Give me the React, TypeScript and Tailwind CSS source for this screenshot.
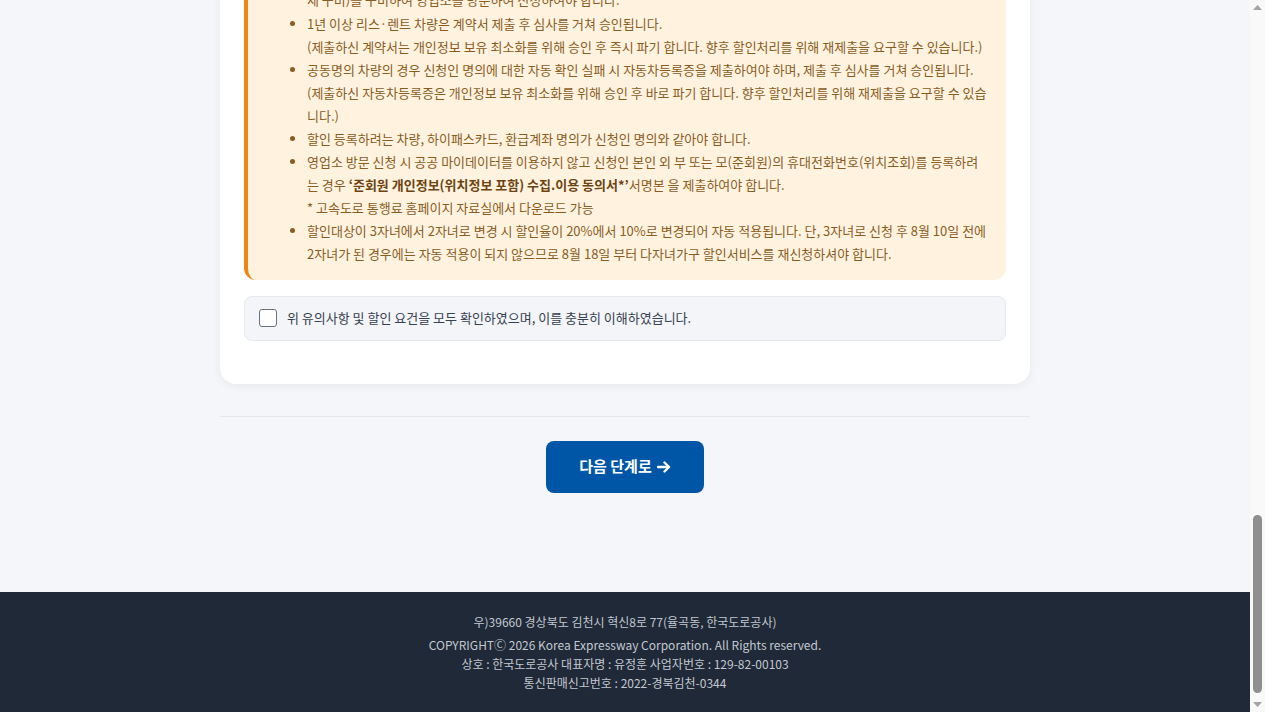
const Scrollbar = () => (
  <div className="flex w-[15px] shrink-0 flex-col items-center bg-[#f9f9f9]">
    <div className="flex h-[15px] w-full items-center justify-center">
      <svg width="9" height="5" viewBox="0 0 9 5" aria-hidden="true">
        <path d="M4.5 0 9 5H0z" fill="#a3a3a3" />
      </svg>
    </div>
    <div className="flex-1" />
    <div className="h-[178px] w-[9px] rounded-full bg-[#8f8f8f]" />
    <div className="mt-[4px] flex h-[15px] w-full items-center justify-center">
      <svg width="9" height="5" viewBox="0 0 9 5" aria-hidden="true">
        <path d="M0 0h9L4.5 5z" fill="#a3a3a3" />
      </svg>
    </div>
  </div>
)

const App = () => {
  return (
    <div
      className="flex h-screen overflow-hidden bg-[#f4f6f9]"
      style={{ fontFamily: '"Noto Sans CJK KR", "Noto Sans", sans-serif' }}
    >
      <div className="flex min-w-0 flex-1 flex-col">
        <main className="mx-auto -mt-[11.6px] w-[810px]">
          {/* Notice card (scrolled, top part above the view) */}
          <section className="rounded-b-2xl bg-white px-6 pb-[43px] shadow-[0_2px_10px_rgba(15,23,42,0.06)]">
            <div className="rounded-br-xl rounded-bl-xl border-l-4 border-[#ec8512] bg-[#fff3e0] pb-[14px] pr-4 pl-5">
              <ul className="list-disc pl-[39px] text-[13px] leading-[23.1px] text-[#8a5c1e] marker:text-[#8a5c1e]">
                <li className="list-none">체 구비)를 구비하여 영업소를 방문하여 신청하여야 합니다.</li>
                <li>
                  1년 이상 리스·렌트 차량은 계약서 제출 후 심사를 거쳐 승인됩니다.
                  <br />
                  (제출하신 계약서는 개인정보 보유 최소화를 위해 승인 후 즉시 파기 합니다. 향후 할인처리를 위해 재제출을 요구할 수 있습니다.)
                </li>
                <li>
                  공동명의 차량의 경우 신청인 명의에 대한 자동 확인 실패 시 자동차등록증을 제출하여야 하며, 제출 후 심사를 거쳐 승인됩니다.
                  <br />
                  (제출하신 자동차등록증은 개인정보 보유 최소화를 위해 승인 후 바로 파기 합니다. 향후 할인처리를 위해 재제출을 요구할 수 있습
                  <br />
                  니다.)
                </li>
                <li>할인 등록하려는 차량, 하이패스카드, 환급계좌 명의가 신청인 명의와 같아야 합니다.</li>
                <li>
                  영업소 방문 신청 시 공공 마이데이터를 이용하지 않고 신청인 본인 외 부 또는 모(준회원)의 휴대전화번호(위치조회)를 등록하려
                  <br />
                  는 경우{' '}
                  <strong className="font-bold text-[#6e4310]">
                    ‘준회원 개인정보(위치정보 포함) 수집.이용 동의서*’
                  </strong>
                  서명본 을 제출하여야 합니다.
                  <br />* 고속도로 통행료 홈페이지 자료실에서 다운로드 가능
                </li>
                <li>
                  할인대상이 3자녀에서 2자녀로 변경 시 할인율이 20%에서 10%로 변경되어 자동 적용됩니다. 단, 3자녀로 신청 후 8월 10일 전에
                  <br />
                  2자녀가 된 경우에는 자동 적용이 되지 않으므로 8월 18일 부터 다자녀가구 할인서비스를 재신청하셔야 합니다.
                </li>
              </ul>
            </div>

            <label className="mt-4 flex h-[45px] cursor-pointer items-center gap-[10px] rounded-lg border border-[#e6e9ee] bg-[#f3f5f8] px-[14px]">
              <input
                type="checkbox"
                className="h-[18px] w-[18px] appearance-none rounded-[3px] border-[1.5px] border-[#6b7280] bg-white"
              />
              <span className="text-[13px] text-[#374151]">
                위 유의사항 및 할인 요건을 모두 확인하였으며, 이를 충분히 이해하였습니다.
              </span>
            </label>
          </section>

          {/* Actions */}
          <div className="mt-8 border-t border-[#e5e8ec] pt-6 pb-[99px]">
            <button
              type="button"
              className="mx-auto flex h-[52px] w-[158px] items-center justify-center gap-[5px] rounded-lg bg-[#0056a6] text-[15px] font-bold text-white"
            >
              다음 단계로
              <svg width="14" height="12" viewBox="0 0 14 12" fill="none" aria-hidden="true">
                <path d="M1 6h10" stroke="white" strokeWidth="2.4" strokeLinecap="round" />
                <path d="M7.5 1.5 12 6l-4.5 4.5" stroke="white" strokeWidth="2.4" strokeLinecap="round" strokeLinejoin="round" />
              </svg>
            </button>
          </div>
        </main>

        <footer className="flex-1 bg-[#1f2937] pt-5 pb-5 text-center text-[12px] leading-[19px] text-[#c3c8d0]">
          <p className="mb-1">우)39660 경상북도 김천시 혁신8로 77(율곡동, 한국도로공사)</p>
          <p>COPYRIGHTⒸ 2026 Korea Expressway Corporation. All Rights reserved.</p>
          <p>상호 : 한국도로공사 대표자명 : 유정훈 사업자번호 : 129-82-00103</p>
          <p>통신판매신고번호 : 2022-경북김천-0344</p>
        </footer>
      </div>

      <Scrollbar />
    </div>
  )
}

export default App
